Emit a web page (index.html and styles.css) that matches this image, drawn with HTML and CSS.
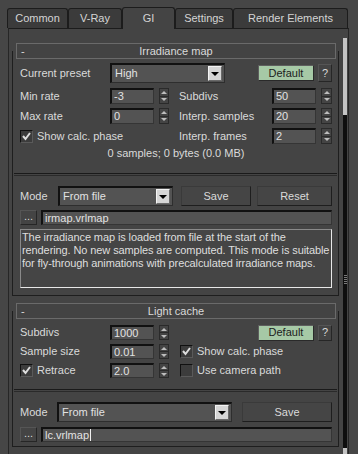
FILE: index.html
```html
<!DOCTYPE html>
<html lang="en">
<head>
    <meta charset="UTF-8">
    <meta name="viewport" content="width=device-width, initial-scale=1.0">
    <title>GI</title>
    <link rel="stylesheet" href="styles.css">
</head>
<body>
    <div class="tabs">
        <span class="tab tab-common">Common</span>
        <span class="tab tab-vray">V-Ray</span>
        <span class="tab tab-gi active">GI</span>
        <span class="tab tab-settings">Settings</span>
        <span class="tab tab-re">Render Elements</span>
    </div>

    <div class="panel">
        <div class="rollouts">

            <!-- Irradiance map -->
            <div class="rollout irr">
                <div class="rollout-head"><span class="minus">-</span><span class="title">Irradiance map</span></div>

                <div class="row preset-row">
                    <span class="lbl w90">Current preset</span>
                    <span class="dd dd-preset"><span class="dd-text">High</span><span class="dd-btn"><i></i></span></span>
                    <span class="btn-default">Default</span>
                    <span class="btn-q">?</span>
                </div>

                <div class="params">
                    <div class="cell left">
                        <span class="lbl w90">Min rate</span>
                        <span class="field num">-3</span>
                        <span class="spin"><i class="up"></i><i class="dn"></i></span>
                    </div>
                    <div class="cell right">
                        <span class="lbl w93">Subdivs</span>
                        <span class="field num">50</span>
                        <span class="spin"><i class="up"></i><i class="dn"></i></span>
                    </div>
                    <div class="cell left">
                        <span class="lbl w90">Max rate</span>
                        <span class="field num">0</span>
                        <span class="spin"><i class="up"></i><i class="dn"></i></span>
                    </div>
                    <div class="cell right">
                        <span class="lbl w93">Interp. samples</span>
                        <span class="field num">20</span>
                        <span class="spin"><i class="up"></i><i class="dn"></i></span>
                    </div>
                    <div class="cell left">
                        <span class="check on"><svg width="9" height="9" viewBox="0 0 9 9"><polyline points="1,4 3.5,7 8,1" /></svg></span>
                        <span class="check-lbl">Show calc. phase</span>
                    </div>
                    <div class="cell right">
                        <span class="lbl w93">Interp. frames</span>
                        <span class="field num">2</span>
                        <span class="spin"><i class="up"></i><i class="dn"></i></span>
                    </div>
                </div>

                <div class="info">0 samples; 0 bytes (0.0 MB)</div>

                <div class="sep irr-sep"></div>

                <div class="row mode-row">
                    <span class="lbl w38">Mode</span>
                    <span class="dd dd-mode1"><span class="dd-text">From file</span><span class="dd-btn"><i></i></span></span>
                    <span class="btn save1">Save</span>
                    <span class="btn reset1">Reset</span>
                </div>

                <div class="row file-row">
                    <span class="btn-dots">...</span>
                    <span class="field file">irmap.vrlmap</span>
                </div>

                <div class="desc">The irradiance map is loaded from file at the start of the<br>rendering. No new samples are computed. This mode is suitable<br>for fly-through animations with precalculated irradiance maps.</div>
            </div>

            <!-- Light cache -->
            <div class="rollout lc">
                <div class="rollout-head"><span class="minus">-</span><span class="title">Light cache</span></div>

                <div class="params lc-params">
                    <div class="cell left">
                        <span class="lbl w90">Subdivs</span>
                        <span class="field num">1000</span>
                        <span class="spin"><i class="up"></i><i class="dn"></i></span>
                    </div>
                    <div class="cell right end">
                        <span class="btn-default">Default</span>
                        <span class="btn-q">?</span>
                    </div>
                    <div class="cell left">
                        <span class="lbl w90">Sample size</span>
                        <span class="field num">0.01</span>
                        <span class="spin"><i class="up"></i><i class="dn"></i></span>
                    </div>
                    <div class="cell right">
                        <span class="check on r-check"><svg width="9" height="9" viewBox="0 0 9 9"><polyline points="1,4 3.5,7 8,1" /></svg></span>
                        <span class="check-lbl">Show calc. phase</span>
                    </div>
                    <div class="cell left">
                        <span class="w90 check-group">
                            <span class="check on"><svg width="9" height="9" viewBox="0 0 9 9"><polyline points="1,4 3.5,7 8,1" /></svg></span>
                            <span class="check-lbl">Retrace</span>
                        </span>
                        <span class="field num">2.0</span>
                        <span class="spin"><i class="up"></i><i class="dn"></i></span>
                    </div>
                    <div class="cell right">
                        <span class="check r-check"></span>
                        <span class="check-lbl">Use camera path</span>
                    </div>
                </div>

                <div class="sep lc-sep"></div>

                <div class="row mode-row lc-mode">
                    <span class="lbl w37">Mode</span>
                    <span class="dd dd-mode2"><span class="dd-text">From file</span><span class="dd-btn"><i></i></span></span>
                    <span class="btn save2">Save</span>
                </div>

                <div class="row file-row lc-file">
                    <span class="btn-dots">...</span>
                    <span class="field file">lc.vrlmap<span class="caret"></span></span>
                </div>
            </div>

        </div>

        <div class="scroll">
            <div class="sc-top"></div>
            <div class="sc-mid"><div class="grip"></div></div>
            <div class="sc-bot"></div>
        </div>
    </div>
</body>
</html>
```

FILE: styles.css
```css
* {
    box-sizing: border-box;
}

body {
    margin: 0;
    width: 358px;
    height: 454px;
    overflow: hidden;
    background: #464646;
    font-family: "Liberation Sans", Arial, sans-serif;
    font-size: 11px;
    line-height: 13px;
    color: #dadada;
}

/* tabs */
.tabs {
    display: flex;
    align-items: flex-end;
    height: 28px;
    padding-left: 7px;
}

.tab {
    height: 20px;
    display: flex;
    align-items: center;
    justify-content: center;
    background: #3b3b3b;
    border: 1px solid #1c1c1c;
    border-bottom: none;
    border-radius: 3px 3px 0 0;
    color: #d4d4d4;
}

.tab-common { width: 61px; }
.tab-vray { width: 54px; }
.tab-gi { width: 53px; }
.tab-settings { width: 58px; }
.tab-re { width: 115px; }

.tab.active {
    height: 22px;
    margin-bottom: -1px;
    background: #444;
    position: relative;
    z-index: 1;
}

/* main panel */
.panel {
    display: flex;
    margin-left: 8px;
    width: 341px;
    height: 426px;
    background: #444;
    border-top: 1px solid #1c1c1c;
    border-left: 1px solid #262626;
    border-right: 1px solid #262626;
}

.rollouts {
    width: 327px;
    margin-left: 3px;
}

.scroll {
    display: flex;
    flex-direction: column;
    width: 4px;
    margin-left: 4px;
    margin-top: 9px;
}

.sc-top { height: 77px; background: #c4c4c4; }
.sc-mid { height: 333px; background: #0e0e0e; }
.sc-bot { flex: 1; background: #c4c4c4; }

.grip {
    margin-top: 160px;
    margin-left: 1px;
    width: 3px;
    height: 10px;
    background: repeating-linear-gradient(#7a7a7a 0 1px, transparent 1px 2px);
}

/* rollouts */
.rollout {
    display: flex;
    flex-direction: column;
    border: 1px solid #1e1e1e;
    border-top: none;
    padding: 0 6px 0 7px;
}

.irr {
    margin-top: 22px;
    padding-bottom: 7px;
}

.lc {
    margin-top: 15px;
    padding-bottom: 4px;
}

.rollout-head {
    display: grid;
    align-items: center;
    height: 16px;
    margin: -8px -4px 0;
    background: #434343;
    border: 1px solid #6a6a6a;
}

.rollout-head span {
    grid-area: 1 / 1;
}

.minus {
    justify-self: start;
    padding-left: 4px;
}

.title {
    justify-self: center;
}

.row {
    display: flex;
    align-items: center;
}

.lbl {
    white-space: nowrap;
}

.w90 { width: 90px; flex: none; }
.w93 { width: 93px; flex: none; }
.w38 { width: 38px; flex: none; }
.w37 { width: 37px; flex: none; }

.preset-row {
    height: 20px;
    margin-top: 4px;
}

/* dropdowns */
.dd {
    display: flex;
    align-items: center;
    height: 20px;
    padding: 1px 2px 1px 3px;
    background: #535353;
    border-top: 2px solid #111;
    border-left: 2px solid #111;
    border-right: 1px solid #2e2e2e;
    border-bottom: 1px solid #2e2e2e;
    color: #e2e2e2;
}

.dd-text {
    flex: 1;
}

.dd-btn {
    display: flex;
    align-items: center;
    justify-content: center;
    width: 14px;
    height: 15px;
    background: #d6d6d6;
    border-top: 1px solid #f4f4f4;
    border-left: 1px solid #f4f4f4;
    border-right: 1px solid #6a6a6a;
    border-bottom: 1px solid #6a6a6a;
}

.dd-btn i {
    width: 0;
    height: 0;
    border-left: 4px solid transparent;
    border-right: 4px solid transparent;
    border-top: 4px solid #000;
}

.dd-preset { width: 115px; }
.dd-mode1 { width: 115px; }
.dd-mode2 { width: 175px; }

/* buttons */
.btn-default {
    display: flex;
    align-items: center;
    justify-content: center;
    width: 56px;
    height: 16px;
    background: #a6c9a6;
    color: #1c1c1c;
    border: 1px solid #2a2a2a;
    border-top-color: #5e5e5e;
    border-left-color: #5e5e5e;
}

.preset-row .btn-default {
    margin-left: 33px;
}

.btn-q {
    display: flex;
    align-items: center;
    justify-content: center;
    width: 14px;
    height: 18px;
    margin-left: 4px;
    background: #444;
    border: 1px solid #262626;
    border-top-color: #555;
    border-left-color: #555;
}

.lc-params .btn-q {
    height: 16px;
}

.btn {
    display: flex;
    align-items: center;
    justify-content: center;
    height: 20px;
    background: #454545;
    border: 1px solid #1e1e1e;
    border-top-color: #3a3a3a;
    border-left-color: #3a3a3a;
}

.save1 { width: 70px; margin-left: 8px; }
.reset1 { width: 75px; margin-left: 6px; }
.save2 { width: 90px; margin-left: 10px; }

.btn-dots {
    display: flex;
    align-items: center;
    justify-content: center;
    width: 17px;
    height: 15px;
    padding-bottom: 3px;
    background: #444;
    border: 1px solid #262626;
    border-top-color: #555;
    border-left-color: #555;
}

/* fields */
.field {
    display: flex;
    align-items: center;
    height: 16px;
    padding-left: 2px;
    background: #535353;
    border-top: 2px solid #111;
    border-left: 2px solid #111;
    border-right: 1px solid #353535;
    border-bottom: 1px solid #353535;
    color: #e2e2e2;
}

.num {
    width: 44px;
    flex: none;
}

.file {
    flex: 1;
    height: 15px;
    margin-left: 4px;
}

.caret {
    display: inline-block;
    width: 1px;
    height: 12px;
    margin-left: 1px;
    background: #f0f0f0;
}

.spin {
    display: flex;
    flex-direction: column;
    width: 10px;
    height: 16px;
    margin-left: 5px;
    border: 1px solid #2a2a2a;
    background: #444;
}

.right .spin {
    width: 11px;
    margin-left: 5px;
}

.spin i {
    flex: 1;
    display: flex;
    align-items: center;
    justify-content: center;
}

.spin .up {
    border-bottom: 1px solid #2a2a2a;
}

.spin .up::before {
    content: "";
    border-left: 3px solid transparent;
    border-right: 3px solid transparent;
    border-bottom: 3px solid #bdbdbd;
}

.spin .dn::before {
    content: "";
    border-left: 3px solid transparent;
    border-right: 3px solid transparent;
    border-top: 3px solid #bdbdbd;
}

/* parameter grid */
.params {
    display: grid;
    grid-template-columns: 159px 1fr;
    grid-auto-rows: 16px;
    row-gap: 4px;
    margin-top: 5px;
}

.cell {
    display: flex;
    align-items: center;
}

.cell.end {
    justify-content: flex-end;
}

.lc-params {
    grid-auto-rows: 15px;
    margin-top: 6px;
}

.lc-params .field,
.lc-params .spin {
    height: 15px;
}

.check {
    display: flex;
    align-items: center;
    justify-content: center;
    width: 13px;
    height: 13px;
    flex: none;
    background: #3c3c3c;
    border-top: 1px solid #111;
    border-left: 1px solid #111;
    border-right: 1px solid #5a5a5a;
    border-bottom: 1px solid #5a5a5a;
}

.check svg polyline {
    fill: none;
    stroke: #dedede;
    stroke-width: 2;
}

.check-lbl {
    margin-left: 4px;
    white-space: nowrap;
}

.r-check {
    margin-left: 1px;
}

.r-check + .check-lbl {
    margin-left: 4px;
}

.check-group {
    display: flex;
    align-items: center;
}

.info {
    margin-top: 3px;
    text-align: center;
}

/* separators */
.sep {
    height: 3px;
    margin: 0 -5px 0 -6px;
    border-top: 1px solid #1a1a1a;
    border-bottom: 1px solid #2a2a2a;
}

.irr-sep { margin-top: 13px; }
.lc-sep { margin-top: 11px; }

.mode-row {
    height: 20px;
    margin-top: 10px;
}

.file-row {
    height: 15px;
    margin-top: 4px;
}

.lc-file {
    margin-top: 5px;
}

.desc {
    height: 59px;
    margin-top: 4px;
    padding: 1px 1px 0 1px;
    white-space: nowrap;
    overflow: hidden;
    letter-spacing: -0.1px;
    background: #454545;
    border-top: 1px solid #8a8a8a;
    border-left: 1px solid #8a8a8a;
    border-right: 1px solid #e8e8e8;
    border-bottom: 1px solid #e8e8e8;
    color: #dedede;
}
```
